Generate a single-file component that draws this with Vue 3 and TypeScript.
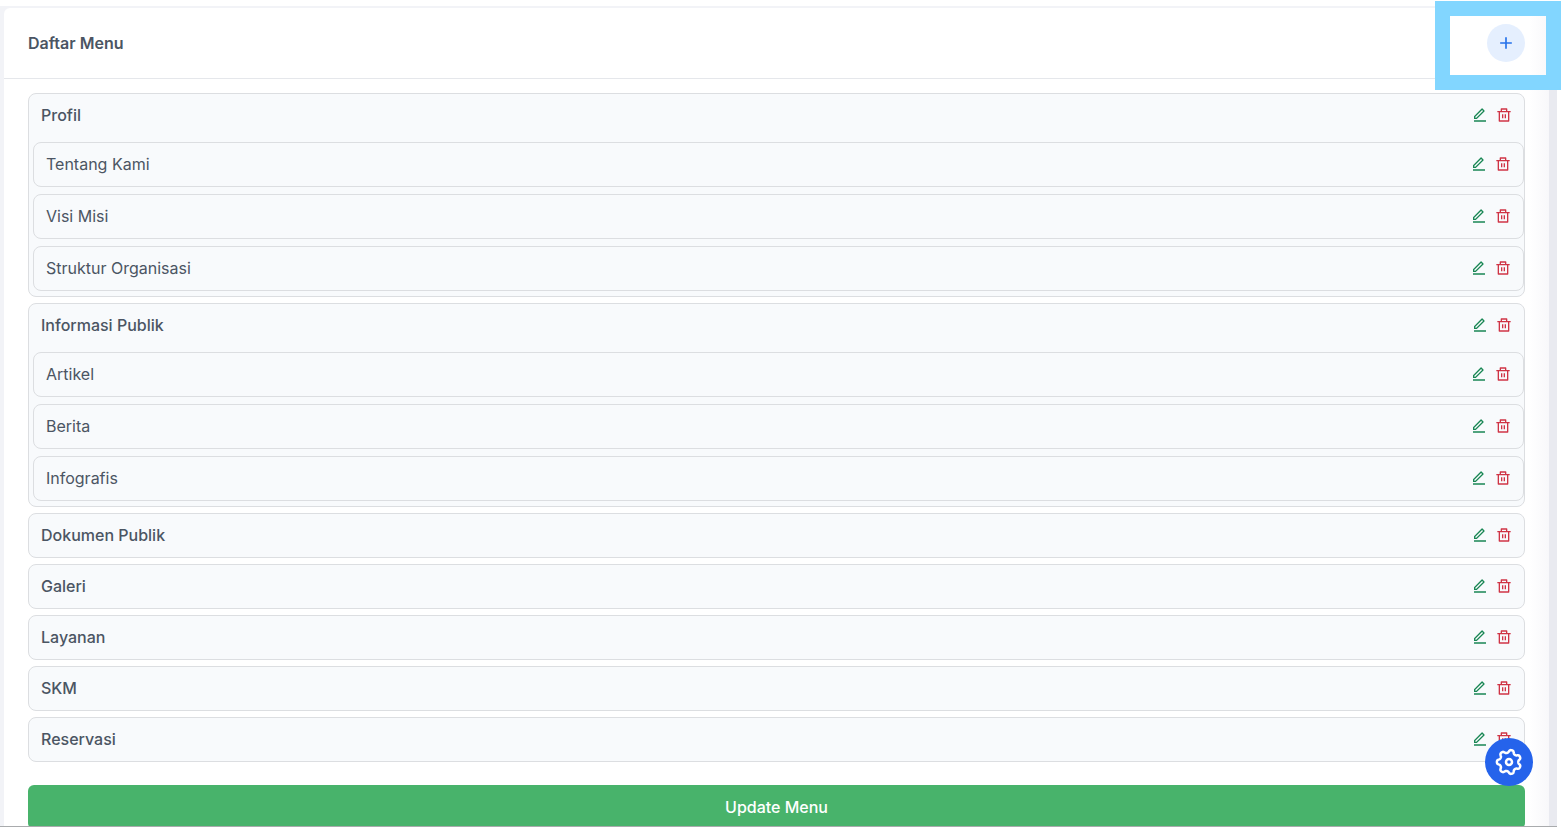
<script setup lang="ts">
interface MenuEntry {
  name: string
  children?: MenuEntry[]
}

const menus: MenuEntry[] = [
  { name: 'Profil', children: [{ name: 'Tentang Kami' }, { name: 'Visi Misi' }, { name: 'Struktur Organisasi' }] },
  { name: 'Informasi Publik', children: [{ name: 'Artikel' }, { name: 'Berita' }, { name: 'Infografis' }] },
  { name: 'Dokumen Publik' },
  { name: 'Galeri' },
  { name: 'Layanan' },
  { name: 'SKM' },
  { name: 'Reservasi' },
]

const editPath =
  'M6.414 16L16.556 5.858l-1.414-1.414L5 14.586V16h1.414zm.829 2H3v-4.243L14.435 2.322a1 1 0 0 1 1.414 0l2.829 2.829a1 1 0 0 1 0 1.414L7.243 18zM3 20h18v2H3v-2z'
const binPath =
  'M17 6h5v2h-2v13a1 1 0 0 1-1 1H5a1 1 0 0 1-1-1V8H2V6h5V3a1 1 0 0 1 1-1h8a1 1 0 0 1 1 1v3zm1 2H6v12h12V8zm-9 3h2v6H9v-6zm4 0h2v6h-2v-6zM9 4v2h6V4H9z'

// Outline of a gear with seven rounded teeth, centred on 14,14
const gearPoints = Array.from({ length: 168 }, (_, i) => {
  const angle = (i / 168) * Math.PI * 2
  const radius = 10.7 + 1.5 * Math.tanh(1.6 * Math.cos(7 * (angle - Math.PI)))
  return `${(14 + radius * Math.cos(angle)).toFixed(2)},${(14 + radius * Math.sin(angle)).toFixed(2)}`
}).join(' ')
</script>

<template>
  <div class="page">
    <div class="viewport">
      <main class="card">
        <header class="card-header">
          <h1>Daftar Menu</h1>
          <button class="add" type="button" aria-label="Tambah menu">
            <svg viewBox="0 0 24 24"><path d="M11 11V5h2v6h6v2h-6v6h-2v-6H5v-2z" /></svg>
          </button>
        </header>
        <div class="card-body">
          <ul class="menu">
            <li v-for="menu in menus" :key="menu.name" class="item">
              <div class="row">
                <span class="name">{{ menu.name }}</span>
                <button class="icon edit" type="button" :aria-label="'Edit ' + menu.name">
                  <svg viewBox="0 0 24 24"><path :d="editPath" /></svg>
                </button>
                <button class="icon remove" type="button" :aria-label="'Hapus ' + menu.name">
                  <svg viewBox="0 0 24 24"><path :d="binPath" /></svg>
                </button>
              </div>
              <ul v-if="menu.children" class="submenu">
                <li v-for="child in menu.children" :key="child.name" class="item">
                  <div class="row">
                    <span>{{ child.name }}</span>
                    <button class="icon edit" type="button" :aria-label="'Edit ' + child.name">
                      <svg viewBox="0 0 24 24"><path :d="editPath" /></svg>
                    </button>
                    <button class="icon remove" type="button" :aria-label="'Hapus ' + child.name">
                      <svg viewBox="0 0 24 24"><path :d="binPath" /></svg>
                    </button>
                  </div>
                </li>
              </ul>
            </li>
          </ul>
          <button class="update" type="button">Update Menu</button>
        </div>
      </main>
    </div>
    <div class="highlight"></div>
    <button class="settings" type="button" aria-label="Pengaturan">
      <svg viewBox="0 0 28 28">
        <polygon :points="gearPoints" />
        <circle cx="14" cy="14" r="3" />
      </svg>
    </button>
  </div>
</template>

<style>
body {
  margin: 0;
  overflow: hidden;
}
</style>

<style scoped>
.page {
  position: relative;
  box-sizing: border-box;
  height: 100vh;
  padding: 6px 5px 1px 0;
  background: #fff;
  font: 16px/24px Inter, "Liberation Sans", sans-serif;
  color: #4b5563;
}
.viewport {
  box-sizing: border-box;
  height: 100%;
  overflow: hidden;
  padding: 2px 8px 0 4px;
  border-bottom: 1px solid #a9abad;
  background: linear-gradient(90deg, #f2f3f7 98%, #e9eaf0 99%);
}
.card {
  min-height: 100%;
  border-radius: 6px 6px 0 0;
  background: linear-gradient(270deg, #f8f8fa, #fff 20px);
}
.card-header {
  display: flex;
  align-items: center;
  justify-content: space-between;
  height: 70px;
  padding: 0 24px;
  border-bottom: 1px solid #e5e7eb;
}
h1 {
  margin: 0;
  font-size: 16px;
  line-height: 24px;
  font-weight: 600;
}
button {
  border: 0;
  padding: 0;
  font: inherit;
  cursor: pointer;
}
svg {
  display: block;
  fill: currentColor;
}
.add {
  display: grid;
  place-items: center;
  width: 38px;
  height: 38px;
  border-radius: 50%;
  background: #e5effe;
  color: #2672ea;
}
.add svg {
  width: 20px;
  height: 20px;
}
.card-body {
  padding: 14px 24px 0;
}
ul {
  display: grid;
  gap: 6px;
  margin: 0;
  padding: 0;
  list-style: none;
}
.item {
  border: 1px solid #dcdee1;
  border-radius: 8px;
  background: #f8fafc;
}
.row {
  display: flex;
  box-sizing: border-box;
  align-items: center;
  gap: 8px;
  height: 43px;
  padding: 0 12px 2px;
}
.row span {
  flex: 1;
}
.row .name {
  font-weight: 500;
}
.submenu {
  gap: 7px;
  margin: 5px 0 5px 4px;
}
.icon {
  background: none;
}
.icon svg {
  width: 16px;
  height: 16px;
}
.edit {
  color: #198754;
}
.remove {
  color: #cf3445;
}
.update {
  width: 100%;
  height: 44px;
  margin-top: 23px;
  border-radius: 6px;
  background: #48b36b;
  color: #fff;
  font-weight: 500;
}
.highlight {
  position: absolute;
  top: 1px;
  right: 1px;
  box-sizing: border-box;
  width: 126px;
  height: 89px;
  border: 15px solid #82d6ff;
  pointer-events: none;
}
.settings {
  position: absolute;
  right: 29px;
  bottom: 42px;
  display: grid;
  place-items: center;
  width: 48px;
  height: 48px;
  border-radius: 50%;
  background: #2563eb;
  color: #fff;
}
.settings svg {
  width: 28px;
  height: 28px;
  fill: none;
  stroke: currentColor;
  stroke-width: 2.5;
  stroke-linejoin: round;
}
</style>
